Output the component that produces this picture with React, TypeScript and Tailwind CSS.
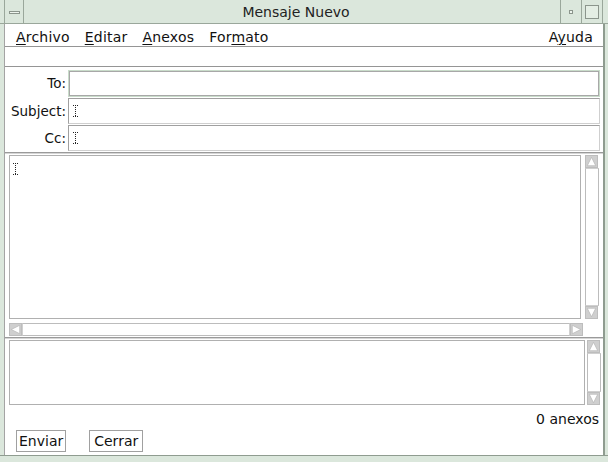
import React from "react";

const font = { fontFamily: '"DejaVu Sans", "Liberation Sans", sans-serif' };

function Mn({ pre = "", u, post }: { pre?: string; u: string; post: string }) {
  return (
    <span>
      {pre}
      <span className="underline underline-offset-[2px] decoration-1">{u}</span>
      {post}
    </span>
  );
}

function IBeam() {
  return (
    <svg width="5" height="12" viewBox="0 0 5 12" className="shrink-0">
      <path d="M0 0.5h5M0 11.5h5M2.5 0v12" stroke="#222" strokeWidth="1" strokeDasharray="1 1" fill="none" />
    </svg>
  );
}

function Arrow({ dir }: { dir: "up" | "down" | "left" | "right" }) {
  const pts: Record<string, string> = {
    up: "6.5,1.5 11.5,11.5 1.5,11.5",
    down: "1.5,1.5 11.5,1.5 6.5,11.5",
    left: "1.5,6.5 11.5,1.5 11.5,11.5",
    right: "1.5,1.5 11.5,6.5 1.5,11.5",
  };
  return (
    <div className="w-[13px] h-[13px] bg-[#cfcfcf] border border-[#bdbdbd] shrink-0">
      <svg width="11" height="11" viewBox="0 0 13 13" className="block">
        <polygon points={pts[dir]} fill="#ffffff" stroke="#b4b4b4" strokeWidth="0.8" />
      </svg>
    </div>
  );
}

function VScroll({ h }: { h: string }) {
  return (
    <div className={`w-[14px] ${h} flex flex-col shrink-0`}>
      <Arrow dir="up" />
      <div className="flex-1 border-x border-[#bcbcbc] border-y border-y-[#d0d0d0] bg-white" />
      <Arrow dir="down" />
    </div>
  );
}

function Field({ label, focus, cursor, h }: { label: string; focus?: boolean; cursor?: boolean; h: string }) {
  return (
    <div className={`flex items-stretch ${h}`}>
      <div className="w-[62px] text-right pr-[1px] text-[13.5px] text-[#111] flex items-center justify-end">{label}</div>
      <div
        className={`flex-1 ml-[1px] flex items-center pl-[4px] bg-white border ${
          focus
            ? "border-[#c9dcca] outline outline-1 outline-[#a8a8a8] -outline-offset-2"
            : "border-[#a0a0a0] border-r-[#cfcfcf] border-b-[#cfcfcf]"
        }`}
      >
        {cursor && <IBeam />}
      </div>
    </div>
  );
}

export default function App() {
  return (
    <div className="w-[608px] h-[462px] bg-[#dbe7dc] flex flex-col overflow-hidden text-[#111]" style={font}>
      {/* title bar */}
      <div className="h-[24px] shrink-0 flex items-stretch border-b border-[#9aa79b]">
        <div className="w-[5px] border-r border-[#9aa79b]" />
        <div className="w-[19px] border-r border-[#9aa79b] flex items-center justify-center pt-[2px]">
          <div className="w-[11px] h-[3px] border border-[#8b958c] bg-[#eef5ee]" />
        </div>
        <div className="flex-1 flex items-center justify-center text-[14px] text-[#222] pt-[1px] pl-[8px]">Mensaje Nuevo</div>
        <div className="w-[21px] border-l border-[#9aa79b] flex items-center justify-center">
          <div className="w-[4px] h-[4px] border border-[#8b958c] bg-[#eef5ee]" />
        </div>
        <div className="w-[21px] border-l border-[#9aa79b] flex items-center justify-center">
          <div className="w-[14px] h-[14px] border border-[#8b958c] bg-[#e4eee4]" />
        </div>
        <div className="w-[6px] border-l border-[#9aa79b]" />
      </div>

      {/* body */}
      <div className="flex-1 flex">
        <div className="w-[4px]" />
        <div className="flex-1 bg-white border-l border-[#a4a4a4] border-r-2 border-r-[#8f9c90] flex flex-col">
          {/* menu */}
          <div className="h-[23px] shrink-0 flex items-end pb-[1px] text-[14px] leading-[16px] pl-[11px] pr-[10px] border-b border-[#959595]">
            <div className="flex gap-[15px] tracking-[0.2px]">
              <Mn u="A" post="rchivo" />
              <Mn u="E" post="ditar" />
              <Mn u="A" post="nexos" />
              <Mn pre="For" u="m" post="ato" />
            </div>
            <div className="ml-auto tracking-[0.2px]">
              <Mn pre="A" u="y" post="uda" />
            </div>
          </div>
          {/* toolbar */}
          <div className="h-[20px] shrink-0 border-b border-[#959595]" />

          {/* form */}
          <div className="pt-[3px] pr-[3px] flex flex-col gap-[1px]">
            <Field label="To:" focus h="h-[27px]" />
            <Field label="Subject:" cursor h="h-[26px]" />
            <Field label="Cc:" cursor h="h-[26px]" />
          </div>
          <div className="mt-[1px] h-[1px] bg-[#9a9a9a]" />
          <div className="h-[1px] bg-[#d6d6d6]" />

          {/* message */}
          <div className="pl-[4px] pt-[1px] flex gap-[4px] pr-[4px]">
            <div className="flex-1 h-[164px] border border-[#b0b0b0] bg-white pl-[3px] pt-[7px]">
              <IBeam />
            </div>
            <VScroll h="h-[164px]" />
          </div>
          <div className="pl-[4px] pt-[4px] pr-[20px]">
            <div className="h-[13px] flex">
              <Arrow dir="left" />
              <div className="flex-1 border-y border-[#bcbcbc] border-x border-x-[#d0d0d0]" />
              <Arrow dir="right" />
            </div>
          </div>
          <div className="mt-[1px] h-[1px] bg-[#9a9a9a]" />
          <div className="h-[1px] bg-[#d6d6d6]" />

          {/* attachments */}
          <div className="pl-[4px] pt-[1px] flex gap-[2px] pr-[3px]">
            <div className="flex-1 h-[65px] border border-[#b0b0b0] bg-white" />
            <div className="w-[13px] flex">
              <VScroll h="h-[65px]" />
            </div>
          </div>
          <div className="text-right text-[14px] pr-[4px] mt-[6px] leading-[16px]">0 anexos</div>
          <div className="flex gap-[23px] pl-[11px] mt-[3px]">
            <div className="h-[22px] px-[2px] border border-[#a0a0a0] text-[14px] leading-[20px]">Enviar</div>
            <div className="h-[22px] px-[4px] border border-[#a0a0a0] text-[14px] leading-[20px]">Cerrar</div>
          </div>
        </div>
        <div className="w-[3px]" />
      </div>
      {/* bottom frame */}
      <div className="h-[7px] shrink-0 border-t border-[#8f9c90]" />
    </div>
  );
}
